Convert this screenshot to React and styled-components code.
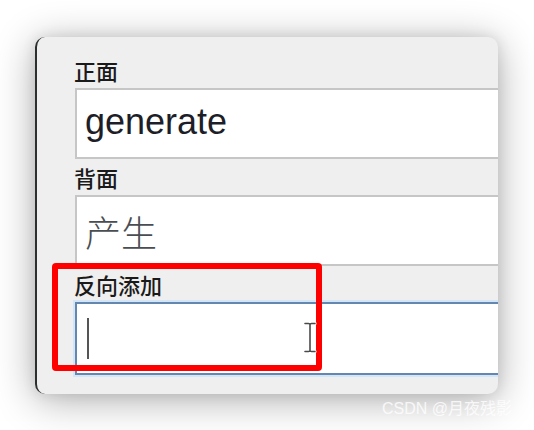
import React from "react";
import styled, { createGlobalStyle } from "styled-components";

const GlobalStyle = createGlobalStyle`
  html, body {
    margin: 0;
    padding: 0;
    background: #ffffff;
  }
  * {
    box-sizing: border-box;
  }
`;

const fields = [
  { label: "正面", value: "generate", kind: "word" },
  { label: "背面", value: "产生", kind: "hint" },
  { label: "反向添加", value: "", kind: "focus" },
];

// I-beam pointer strokes
const beam =
  "M2 1.5h3.5M8.5 1.5H12M7 2.5v26M2 29.5h3.5M8.5 29.5H12M5.5 1.5c1 0 1.5.5 1.5 1M8.5 1.5c-1 0-1.5.5-1.5 1M5.5 29.5c1 0 1.5-.5 1.5-1M8.5 29.5c-1 0-1.5-.5-1.5-1";

const App = () => {
  return (
    <Page>
      <GlobalStyle />
      <Window>
        {fields.map((f, i) => (
          <Field key={f.label} $first={i === 0}>
            <Label>{f.label}</Label>
            <TextBox $kind={f.kind}>
              {f.kind === "focus" ? <Caret /> : <Value $kind={f.kind}>{f.value}</Value>}
            </TextBox>
          </Field>
        ))}
        <Highlight />
        <Pointer viewBox="0 0 14 31" width="14" height="31">
          <path d={beam} fill="none" stroke="#ffffff" strokeWidth="3.2" strokeLinecap="round" />
          <path d={beam} fill="none" stroke="#4a4a4a" strokeWidth="1.6" strokeLinecap="round" />
        </Pointer>
      </Window>
      <Watermark>CSDN @月夜残影</Watermark>
    </Page>
  );
};

export default App;

const Page = styled.div`
  position: relative;
  width: 534px;
  height: 430px;
  overflow: hidden;
  padding: 37px 0 0 35px;
  background: #ffffff;
`;

const Window = styled.div`
  position: relative;
  width: 463px;
  height: 357px;
  padding: 19px 0 0 38px;
  background: #efefef;
  border-left: 2px solid #2b302e;
  border-radius: 10px;
  box-shadow: 0 6px 40px rgba(0, 0, 0, 0.32), 0 0 14px rgba(0, 0, 0, 0.1);
  overflow: hidden;
  display: flex;
  flex-direction: column;
`;

const Field = styled.div`
  display: flex;
  flex-direction: column;
  margin-top: ${(p) => (p.$first ? "0" : "4px")};
`;

const Label = styled.div`
  font-family: "Noto Sans CJK SC", "Noto Sans", sans-serif;
  font-size: 22px;
  font-weight: 500;
  line-height: 28px;
  color: #1a1a1a;
  margin-bottom: 4px;
  margin-left: -1px;
`;

const TextBox = styled.div`
  width: 440px;
  height: ${(p) => (p.$kind === "focus" ? "73px" : "71px")};
  display: flex;
  align-items: center;
  padding-left: ${(p) => (p.$kind === "focus" ? "10px" : "8px")};
  background: #ffffff;
  border: 2px solid ${(p) => (p.$kind === "focus" ? "#6487b0" : "#c6c6c6")};
  border-right: none;
  box-shadow: ${(p) => (p.$kind === "focus" ? "0 0 0 2px #d3e6f8" : "none")};
`;

const Value = styled.span`
  font-family: ${(p) =>
    p.$kind === "word"
      ? `"Liberation Sans", Arial, sans-serif`
      : `"Noto Sans CJK SC", sans-serif`};
  font-size: ${(p) => (p.$kind === "word" ? "36px" : "36px")};
  font-weight: ${(p) => (p.$kind === "word" ? 400 : 300)};
  color: ${(p) => (p.$kind === "word" ? "#1d1e28" : "#4a4d52")};
  line-height: 1;
  margin-top: ${(p) => (p.$kind === "word" ? "-4px" : "0")};
`;

const Caret = styled.span`
  display: inline-block;
  width: 2px;
  height: 41px;
  background: #555555;
`;

const Highlight = styled.div`
  position: absolute;
  left: 15px;
  top: 226px;
  width: 270px;
  height: 108px;
  border: 6px solid #ff0000;
  border-radius: 4px;
  pointer-events: none;
`;

const Pointer = styled.svg`
  position: absolute;
  left: 266px;
  top: 285px;
`;

const Watermark = styled.div`
  position: absolute;
  left: 382px;
  top: 399px;
  font-family: "Liberation Sans", "Noto Sans CJK SC", sans-serif;
  font-size: 16px;
  line-height: 20px;
  color: rgba(255, 255, 255, 0.8);
  white-space: nowrap;
`;
